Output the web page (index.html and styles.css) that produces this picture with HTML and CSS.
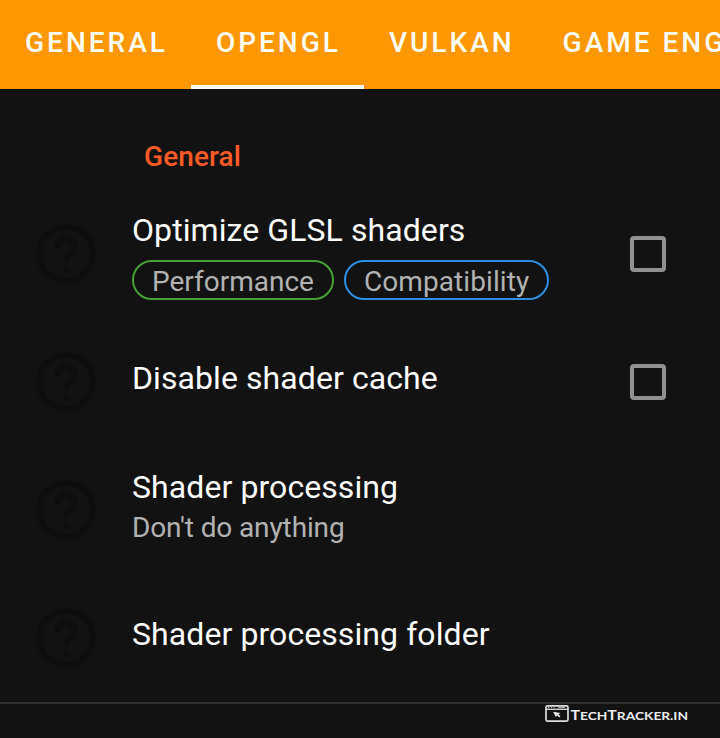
FILE: index.html
```
<!DOCTYPE html>
<html lang="en">
<head>
<meta charset="utf-8">
<title>OpenGL settings</title>
<link rel="stylesheet" href="styles.css">
</head>
<body>
<svg width="0" height="0" class="defs">
  <symbol id="help" viewBox="0 0 24 24"><path d="M11 18h2v-2h-2v2zm1-16C6.480 2 2 6.480 2 12s4.480 10 10 10 10-4.480 10-10S17.520 2 12 2zm0 18c-4.410 0-8-3.590-8-8s3.590-8 8-8 8 3.590 8 8-3.590 8-8 8zm0-14c-2.210 0-4 1.790-4 4h2c0-1.100.9-2 2-2s2 .9 2 2c0 2-3 1.750-3 5h2c0-2.250 3-2.500 3-5 0-2.210-1.790-4-4-4z"/></symbol>
</svg>
<nav class="tabs">
  <div class="tab">GENERAL</div>
  <div class="tab active">OPENGL</div>
  <div class="tab">VULKAN</div>
  <div class="tab">GAME ENGINE</div>
</nav>
<main>
  <h2 class="category">General</h2>
  <section class="row">
    <svg class="help"><use href="#help"/></svg>
    <div class="text tagged">
      <div class="title">Optimize GLSL shaders</div>
      <div class="chips">
        <span class="chip performance">Performance</span>
        <span class="chip compatibility">Compatibility</span>
      </div>
    </div>
    <span class="checkbox"></span>
  </section>
  <section class="row">
    <svg class="help"><use href="#help"/></svg>
    <div class="text single"><div class="title">Disable shader cache</div></div>
    <span class="checkbox"></span>
  </section>
  <section class="row">
    <svg class="help"><use href="#help"/></svg>
    <div class="text double">
      <div class="title">Shader processing</div>
      <div class="summary">Don't do anything</div>
    </div>
  </section>
  <section class="row">
    <svg class="help"><use href="#help"/></svg>
    <div class="text single"><div class="title">Shader processing folder</div></div>
  </section>
</main>
<footer>
  <svg class="brand" width="146" height="20" viewBox="0 0 146 20">
    <rect x="1" y="1.900" width="22" height="15.200" rx="1.500" fill="none" stroke="#dedede" stroke-width="1.700"/>
    <path d="M1 5.300h22" stroke="#dedede" stroke-width="1.300"/>
    <path d="M3 3.600h1.500M6 3.600h1M8.500 3.600h1M13 3.600h7" stroke="#bbb" stroke-width="1"/>
    <path d="M8 7.800l7.500 1.200-2 1.300 2 2-1.300 1.200-2-2-1.200 1.600z" fill="#e8e8e8"/>
    <text class="brand-name" x="25.500" y="15.800" textLength="117.500" lengthAdjust="spacingAndGlyphs">T<tspan class="small">ECH</tspan>T<tspan class="small">RACKER.IN</tspan></text>
  </svg>
</footer>
</body>
</html>
```
FILE: styles.css
```
* { box-sizing: border-box; }
body {
  margin: 0;
  width: 720px;
  height: 738px;
  overflow: hidden;
  background: #121212;
  color: #fff;
  font-family: Roboto, sans-serif;
}
.defs { display: block; }
.tabs {
  display: flex;
  height: 89px;
  overflow: hidden;
  background: #ff9800;
}
.tab {
  flex: none;
  padding: 26px 23px 0 25px;
  font-size: 28px;
  line-height: 33px;
  font-weight: 500;
  letter-spacing: 3px;
  white-space: nowrap;
  border-bottom: 4px solid transparent;
  color: #fffdf5;
}
.tab.active { border-bottom-color: #fff; }
.category {
  height: 101px;
  margin: 0;
  padding: 51px 0 0 144px;
  font-size: 28px;
  line-height: 33px;
  font-weight: 500;
  letter-spacing: 0.1px;
  color: #fb5a27;
}
.row {
  display: flex;
  align-items: center;
  height: 128px;
  padding: 0 54px 0 30px;
}
.help {
  flex: none;
  width: 72px;
  height: 72px;
  margin-right: 30px;
  fill: #0e0e0e;
}
.text { flex: 1; height: 128px; }
.tagged { padding-top: 21px; }
.single { padding-top: 41px; }
.double { padding-top: 22px; }
.title {
  font-size: 32px;
  line-height: 38px;
  letter-spacing: 0.08px;
  white-space: nowrap;
}
.summary {
  margin-top: 5px;
  font-size: 28px;
  line-height: 33px;
  letter-spacing: -0.12px;
  color: #b2b2b2;
}
.chips { display: flex; gap: 10px; margin-top: 11px; }
.chip {
  height: 40px;
  padding: 3px 18px 0;
  border: 2px solid;
  border-radius: 20px;
  font-size: 28px;
  line-height: 33px;
  color: #b2b2b2;
}
.performance { border-color: #45a136; }
.compatibility { border-color: #2d8fe3; letter-spacing: 0.08px; }
.checkbox {
  flex: none;
  width: 36px;
  height: 36px;
  border: 4px solid #919191;
  border-radius: 4px;
}
footer {
  display: flex;
  justify-content: flex-end;
  height: 36px;
  padding-right: 29px;
  border-top: 2px solid #303030;
}
.brand { display: block; }
.brand-name {
  fill: #ececec;
  font: 700 12.5px Lato, sans-serif;
}
.small { font-size: 10.8px; }
```
